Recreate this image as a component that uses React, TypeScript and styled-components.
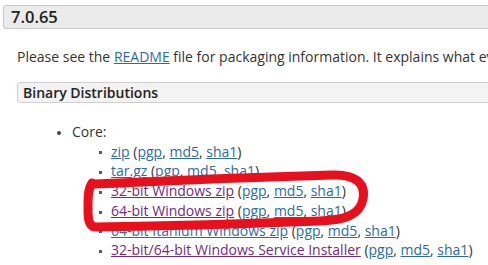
import React from "react";
import styled, { createGlobalStyle } from "styled-components";

const Global = createGlobalStyle`
  html, body { margin: 0; padding: 0; background: #fff; }
  body { font-family: "Open Sans", "Noto Sans", sans-serif; color: #333; overflow: hidden; }
  a { text-decoration: underline; }
`;

const Page = styled.div`
  position: relative;
  width: 488px;
  height: 265px;
  overflow: hidden;
  padding-top: 5px;
  box-sizing: border-box;
`;

const H3 = styled.div`
  margin-left: 3px;
  width: 520px;
  height: 24px;
  box-sizing: border-box;
  border: 1px solid #c8c8c8;
  border-radius: 3px;
  background: #ebebeb;
  font-size: 16.5px;
  font-weight: 600;
  color: #222;
  padding-left: 7px;
  line-height: 22px;
`;

const Section = styled.div`
  padding-left: 17px;
`;

const Para = styled.p`
  margin: 18px 0 0;
  font-size: 14px;
  line-height: 20px;
  white-space: nowrap;
  color: #333;
`;

const Link = styled.a<{ $visited?: boolean }>`
  color: ${(p) => (p.$visited ? "#732a82" : "#2a6ca6")};
`;

const H4 = styled.div`
  margin-top: 15px;
  width: 520px;
  height: 21px;
  box-sizing: border-box;
  border: 1px solid #cfcfcf;
  border-radius: 3px;
  background: #f3f3f3;
  font-size: 14px;
  font-weight: 600;
  color: #222;
  padding-left: 5px;
  line-height: 19px;
`;

const OuterList = styled.ul`
  margin: 19px 0 0;
  padding-left: 72px;
  list-style: disc;
  font-size: 14px;
  line-height: 19.7px;
  color: #333;
  & > li::marker { font-size: 11px; color: #444; }
`;

const InnerList = styled.ul`
  margin: 0;
  padding-left: 39px;
  list-style: none;
  white-space: nowrap;
`;

const SubItem = styled.li`
  &::before {
    content: "";
    display: inline-block;
    width: 3px;
    height: 3px;
    background: #5a5a5a;
    vertical-align: middle;
    margin-left: -12px;
    margin-right: 9px;
  }
`;

const Item = styled.li``;

const Overlay = styled.svg`
  position: absolute;
  left: 0;
  top: 0;
  pointer-events: none;
`;

type Row = { label: string; visited?: boolean };
const rows: Row[] = [
  { label: "zip" },
  { label: "tar.gz" },
  { label: "32-bit Windows zip", visited: true },
  { label: "64-bit Windows zip", visited: true },
  { label: "64-bit Itanium Windows zip" },
  { label: "32-bit/64-bit Windows Service Installer", visited: true },
];

export default function App() {
  return (
    <>
      <Global />
      <Page>
        <H3>7.0.65</H3>
        <Section>
          <Para>
            Please see the <Link href="#">README</Link> file for packaging information. It explains what every distribution contains.
          </Para>
          <H4>Binary Distributions</H4>
        </Section>
        <OuterList>
          <Item>
            Core:
            <InnerList>
              {rows.map((r) => (
                <SubItem key={r.label}>
                  <Link href="#" $visited={r.visited}>{r.label}</Link> (
                  <Link href="#">pgp</Link>, <Link href="#">md5</Link>,{" "}
                  <Link href="#">sha1</Link>)
                </SubItem>
              ))}
            </InnerList>
          </Item>
        </OuterList>
        <Overlay width="488" height="265" viewBox="0 0 488 265">
          <path
            d="M95 184 C 160 181, 260 177, 332 175 C 355 174, 366 183, 363 199 C 360 215, 345 220, 320 221 C 240 224, 160 226, 96 227 C 89 227, 88 220, 88 210 C 88 197, 88 189, 92 183"
            fill="none"
            stroke="#e8101c"
            strokeWidth="9"
            strokeLinecap="round"
            strokeLinejoin="round"
          />
        </Overlay>
      </Page>
    </>
  );
}
